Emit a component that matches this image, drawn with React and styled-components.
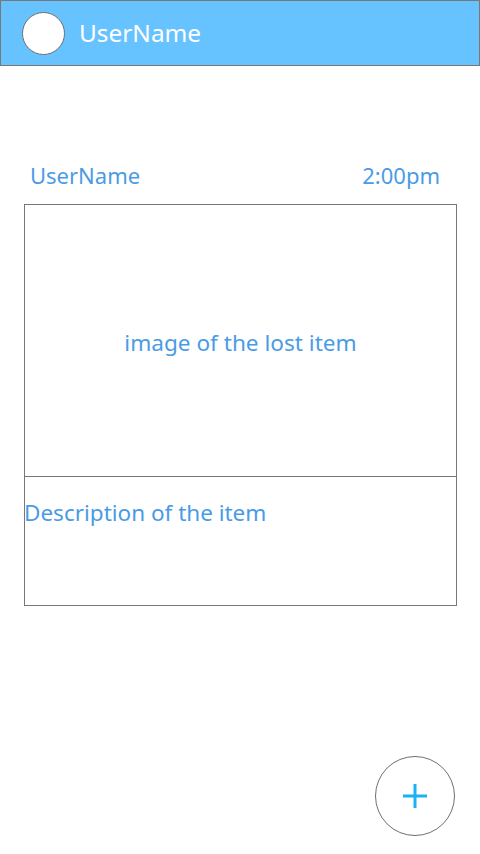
import React from 'react';
import styled, { createGlobalStyle } from 'styled-components';

const GlobalStyle = createGlobalStyle`
  html, body {
    margin: 0;
    padding: 0;
    background: #ffffff;
  }
  body {
    font-family: 'Noto Sans', 'Open Sans', sans-serif;
  }
`;

const Page = styled.div`
  width: 480px;
  height: 854px;
  display: flex;
  flex-direction: column;
  position: relative;
  overflow: hidden;
`;

const Header = styled.header`
  box-sizing: border-box;
  height: 66px;
  background: #66c3ff;
  border: 1px solid #777777;
  display: flex;
  align-items: center;
  gap: 14px;
  padding-left: 21px;
`;

const Avatar = styled.div`
  box-sizing: border-box;
  width: 43px;
  height: 43px;
  border-radius: 50%;
  background: #ffffff;
  border: 1px solid #6f6f6f;
`;

const HeaderName = styled.span`
  color: #ffffff;
  font-size: 24.4px;
  line-height: 1;
  margin-top: 1px;
`;

const Feed = styled.main`
  padding: 94px 23px 0 24px;
  display: flex;
  flex-direction: column;
`;

const Meta = styled.div`
  display: flex;
  justify-content: space-between;
  padding: 0 17px 0 6px;
  height: 44px;
  color: #4a9be6;
  font-size: 22px;
  line-height: 30px;
`;

const Card = styled.section`
  box-sizing: border-box;
  width: 433px;
  border: 1px solid #777777;
  display: flex;
  flex-direction: column;
`;

const ImageArea = styled.div`
  height: 272px;
  display: flex;
  align-items: center;
  justify-content: center;
  border-bottom: 1px solid #777777;
  color: #4a9be6;
  font-size: 22.6px;
  padding-top: 4px;
  box-sizing: border-box;
`;

const Description = styled.div`
  height: 128px;
  margin-left: -1px;
  padding-top: 21px;
  box-sizing: border-box;
  color: #4a9be6;
  font-size: 22.5px;
  line-height: 30px;
`;

const Fab = styled.button`
  position: absolute;
  right: 25px;
  bottom: 18px;
  box-sizing: border-box;
  width: 80px;
  height: 80px;
  border-radius: 50%;
  border: 1px solid #6f6f6f;
  background: #ffffff;
  display: flex;
  align-items: center;
  justify-content: center;
  padding: 0;
  cursor: pointer;
`;

export default function App() {
  return (
    <Page>
      <GlobalStyle />
      <Header>
        <Avatar />
        <HeaderName>UserName</HeaderName>
      </Header>
      <Feed>
        <Meta>
          <span>UserName</span>
          <span>2:00pm</span>
        </Meta>
        <Card>
          <ImageArea>image of the lost item</ImageArea>
          <Description>Description of the item</Description>
        </Card>
      </Feed>
      <Fab aria-label="Add">
        <svg width="26" height="26" viewBox="0 0 26 26">
          <path d="M13 1v24M1 13h24" stroke="#1ab2f5" strokeWidth="3" fill="none" />
        </svg>
      </Fab>
    </Page>
  );
}
